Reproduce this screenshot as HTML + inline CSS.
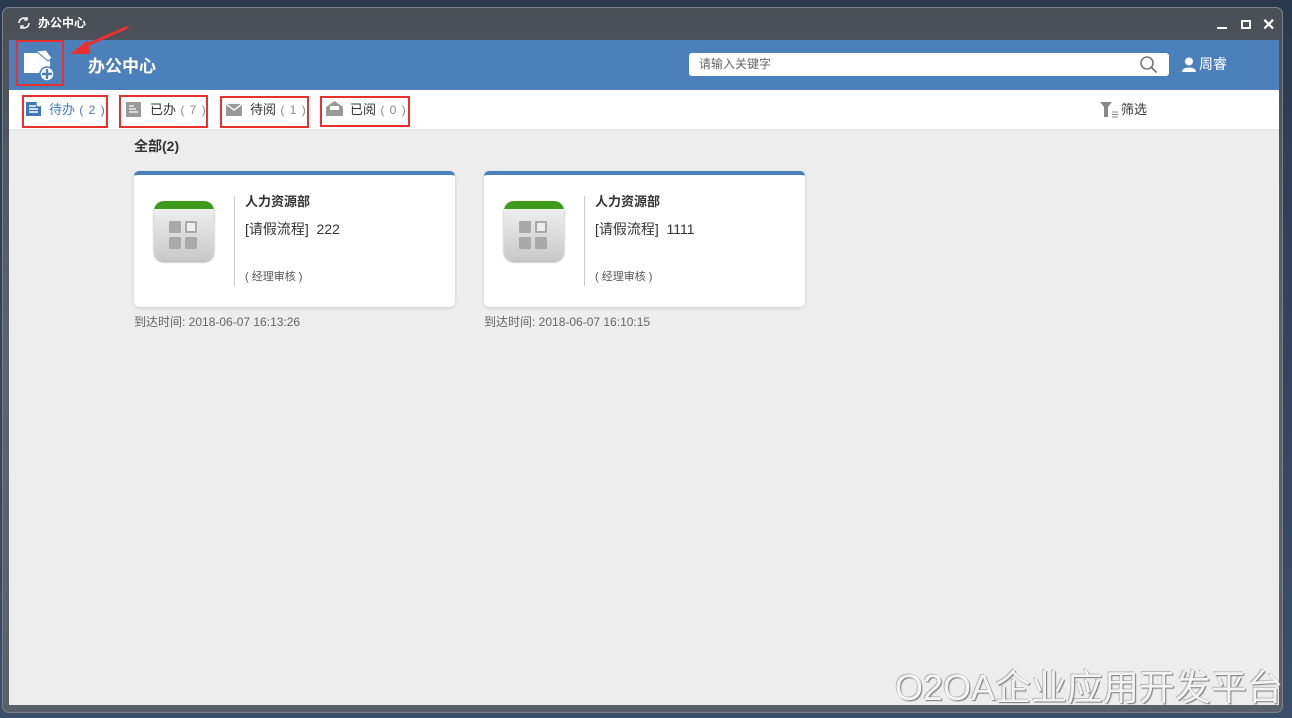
<!DOCTYPE html>
<html><head><meta charset="utf-8"><style>
*{margin:0;padding:0;box-sizing:border-box}
body{width:1292px;height:718px;overflow:hidden;background:linear-gradient(180deg,#2a3a4e,#3b4f68);font-family:"Liberation Sans","Noto Sans CJK SC",sans-serif;position:relative}
.win{position:absolute;left:2px;top:7px;width:1281px;height:706px;background:linear-gradient(180deg,#4a4f56,#5d646c 50%,#5a6068);border-radius:7px;border:1px solid #7a8088}
.title{position:absolute;left:38px;top:14px;color:#fff;font-size:12px;font-weight:bold}
.hdr{position:absolute;left:9px;top:40px;width:1270px;height:50px;background:#4c80bb}
.tabs{position:absolute;left:9px;top:90px;width:1270px;height:40px;background:#fff;border-bottom:1px solid #e2e2e2}
.main{position:absolute;left:9px;top:130px;width:1270px;height:575px;background:#ededed}
.abs{position:absolute}
.red{position:absolute;border:2px solid #e8302f}
.tab{position:absolute;top:99px;font-size:13px;color:#333}
.tab span{color:#888;font-size:12px;letter-spacing:1px}
.card{position:absolute;top:171px;width:321px;height:136px;background:#fff;border-top:4px solid #4a7fbc;border-radius:5px;box-shadow:0 1px 3px rgba(0,0,0,.15)}
.ico{position:absolute;left:20px;top:26px;width:60px;height:60px;border-radius:10px;background:linear-gradient(180deg,#f4f4f4,#c8c8c8);box-shadow:0 1px 2px rgba(0,0,0,.4);overflow:hidden}
.ico:before{content:"";position:absolute;left:0;top:0;right:0;height:8px;background:#3d9a1a}
.sq{position:absolute;width:12px;height:12px;background:#a9a9a9;border-radius:1px}
.vl{position:absolute;left:100px;top:21px;width:1px;height:90px;background:#ccc}
.c1{position:absolute;left:111px;top:16px;font-size:13px;font-weight:bold;color:#333}
.c2{position:absolute;left:111px;top:44px;font-size:14px;color:#333}
.c3{position:absolute;left:111px;top:93px;font-size:11px;color:#555}
.time{position:absolute;top:313px;font-size:12px;color:#666}
</style></head><body>
<div class="win"></div>
<svg class="abs" style="left:17px;top:16px" width="14" height="14" viewBox="0 0 14 14"><path d="M2 7a5 5 0 0 1 8.5-3.5M12 7a5 5 0 0 1-8.5 3.5" stroke="#fff" stroke-width="1.5" fill="none"/><path d="M10 1v3h-3M4 13v-3h3" stroke="#fff" stroke-width="1.3" fill="none"/></svg>
<div class="title">办公中心</div>
<div class="abs" style="left:1217px;top:27px;width:10px;height:2px;background:#fff"></div>
<div class="abs" style="left:1241px;top:20px;width:10px;height:9px;border:2px solid #fff"></div>
<div class="abs" style="left:1262px;top:15px;color:#fff;font-size:16px;font-weight:bold">✕</div>
<div class="hdr"></div>
<svg class="abs" style="left:22px;top:48px" width="36" height="36" viewBox="0 0 36 36"><path d="M2 5h20l6 8v12H2z" fill="#fff"/><path d="M14 3l10 -1 6 8-4 3z" fill="#fff" stroke="#4c80bb"/><circle cx="25" cy="26" r="7" fill="#fff" stroke="#4c80bb" stroke-width="1.5"/><path d="M25 21v10M20 26h10" stroke="#4c80bb" stroke-width="2.4"/></svg>
<div class="red" style="left:16px;top:40px;width:48px;height:46px"></div>
<svg class="abs" style="left:66px;top:24px" width="64" height="36"><path d="M62 3L14 24" stroke="#e8302f" stroke-width="3"/><path d="M4 30L22 16 24 30z" fill="#e8302f"/></svg>
<div class="abs" style="left:88px;top:52px;color:#fff;font-size:17px;font-weight:bold">办公中心</div>
<div class="abs" style="left:689px;top:53px;width:480px;height:23px;background:#fff;border-radius:3px"></div>
<div class="abs" style="left:699px;top:55px;font-size:12px;color:#666">请输入关键字</div>
<svg class="abs" style="left:1139px;top:55px" width="20" height="20"><circle cx="8" cy="8" r="6" stroke="#777" stroke-width="1.6" fill="none"/><path d="M12.5 12.5l5 5" stroke="#777" stroke-width="1.8"/></svg>
<svg class="abs" style="left:1182px;top:57px" width="14" height="15"><circle cx="7" cy="4.5" r="4" fill="#fff"/><path d="M0 15c0-6 14-6 14 0z" fill="#fff"/></svg>
<div class="abs" style="left:1199px;top:54px;color:#fff;font-size:14px">周睿</div>
<div class="tabs"></div>
<div class="main"></div>
<svg class="abs" style="left:26px;top:101px" width="16" height="16"><rect x="0" y="1" width="15" height="14" fill="#3f78b8"/><path d="M3 5h7M3 8h9M3 11h9" stroke="#fff" stroke-width="1.4"/><circle cx="13" cy="3" r="2.5" fill="#fff"/></svg>
<div class="tab" style="left:49px;color:#3f78b8">待办<span style="color:#3f78b8"> ( 2 )</span></div>
<svg class="abs" style="left:126px;top:102px" width="16" height="16"><rect x="0" y="0" width="15" height="15" fill="#999"/><path d="M3 4h5M3 7h7M3 10h9" stroke="#fff" stroke-width="1.3"/></svg>
<div class="tab" style="left:150px">已办<span> ( 7 )</span></div>
<svg class="abs" style="left:226px;top:104px" width="16" height="12"><rect width="16" height="12" fill="#999"/><path d="M0 0l8 6 8-6" stroke="#fff" stroke-width="1.3" fill="none"/></svg>
<div class="tab" style="left:250px">待阅<span> ( 1 )</span></div>
<svg class="abs" style="left:326px;top:101px" width="17" height="15"><path d="M0 6l8.5-6 8.5 6v9H0z" fill="#999"/><rect x="4" y="5" width="9" height="4" fill="#fff"/></svg>
<div class="tab" style="left:350px">已阅<span> ( 0 )</span></div>
<div class="red" style="left:22px;top:95px;width:86px;height:33px"></div>
<div class="red" style="left:119px;top:95px;width:89px;height:33px"></div>
<div class="red" style="left:220px;top:96px;width:89px;height:32px"></div>
<div class="red" style="left:320px;top:96px;width:90px;height:31px"></div>
<svg class="abs" style="left:1100px;top:102px" width="18" height="16"><path d="M0 0h12L8 5v10H4V5z" fill="#888"/><path d="M12 10h6M12 12.5h6M12 15h6" stroke="#888" stroke-width="1"/></svg>
<div class="abs" style="left:1121px;top:99px;font-size:13px;color:#333">筛选</div>
<div class="abs" style="left:134px;top:136px;font-size:14px;font-weight:bold;color:#333">全部(2)</div>
<div class="card" style="left:134px"><div class="ico"><div class="sq" style="left:15px;top:20px"></div><div class="sq" style="left:31px;top:20px;background:#eee;border:2px solid #aaa"></div><div class="sq" style="left:15px;top:36px"></div><div class="sq" style="left:31px;top:36px"></div></div><div class="vl"></div><div class="c1">人力资源部</div><div class="c2">[请假流程]&nbsp; 222</div><div class="c3">( 经理审核 )</div></div>
<div class="card" style="left:484px"><div class="ico"><div class="sq" style="left:15px;top:20px"></div><div class="sq" style="left:31px;top:20px;background:#eee;border:2px solid #aaa"></div><div class="sq" style="left:15px;top:36px"></div><div class="sq" style="left:31px;top:36px"></div></div><div class="vl"></div><div class="c1">人力资源部</div><div class="c2">[请假流程]&nbsp; 1111</div><div class="c3">( 经理审核 )</div></div>
<div class="time" style="left:134px">到达时间: 2018-06-07 16:13:26</div>
<div class="time" style="left:484px">到达时间: 2018-06-07 16:10:15</div>
<div class="abs" style="left:895px;top:668px;font-size:36px;line-height:40px;color:#f4f4f4;text-shadow:1px 1px 1px #777,-1px -1px 0 #bbb;white-space:nowrap;letter-spacing:0px">O2OA企业应用开发平台</div>
</body></html>
